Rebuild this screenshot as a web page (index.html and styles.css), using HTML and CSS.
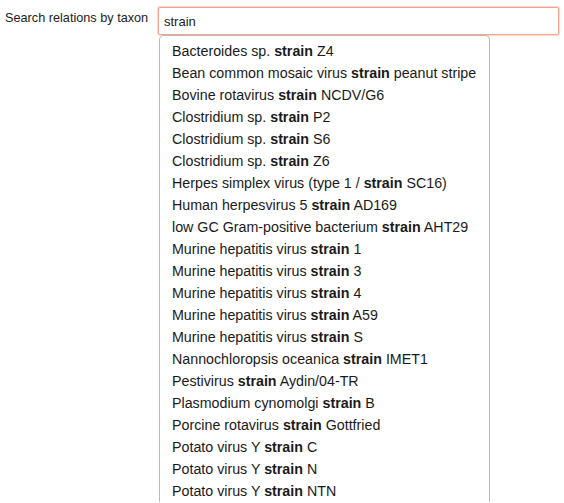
FILE: index.html
```html
<!DOCTYPE html>
<html>
<head>
<meta charset="utf-8">
<link rel="stylesheet" href="styles.css">
</head>
<body>
<div class="field">
  <label class="label" for="q">Search relations by taxon</label>
  <div class="control">
    <input class="input" id="q" type="text" value="strain">
    <ul class="menu">
      <li>Bacteroides sp. <b>strain</b> Z4</li>
      <li>Bean common mosaic virus <b>strain</b> peanut stripe</li>
      <li>Bovine rotavirus <b>strain</b> NCDV/G6</li>
      <li>Clostridium sp. <b>strain</b> P2</li>
      <li>Clostridium sp. <b>strain</b> S6</li>
      <li>Clostridium sp. <b>strain</b> Z6</li>
      <li>Herpes simplex virus (type 1 / <b>strain</b> SC16)</li>
      <li>Human herpesvirus 5 <b>strain</b> AD169</li>
      <li>low GC Gram-positive bacterium <b>strain</b> AHT29</li>
      <li>Murine hepatitis virus <b>strain</b> 1</li>
      <li>Murine hepatitis virus <b>strain</b> 3</li>
      <li>Murine hepatitis virus <b>strain</b> 4</li>
      <li>Murine hepatitis virus <b>strain</b> A59</li>
      <li>Murine hepatitis virus <b>strain</b> S</li>
      <li>Nannochloropsis oceanica <b>strain</b> IMET1</li>
      <li>Pestivirus <b>strain</b> Aydin/04-TR</li>
      <li>Plasmodium cynomolgi <b>strain</b> B</li>
      <li>Porcine rotavirus <b>strain</b> Gottfried</li>
      <li>Potato virus Y <b>strain</b> C</li>
      <li>Potato virus Y <b>strain</b> N</li>
      <li>Potato virus Y <b>strain</b> NTN</li>
    </ul>
  </div>
</div>
</body>
</html>
```

FILE: styles.css
```css
html, body {
  margin: 0;
  padding: 0;
  background: #fff;
}
body {
  font-family: "Liberation Sans", Arial, sans-serif;
  color: #222;
}
.field {
  display: flex;
  align-items: flex-start;
  padding: 7px 5px 0 5px;
}
.label {
  font-size: 12.7px;
  line-height: 16px;
  padding-top: 3px;
  width: 153px;
  flex: none;
}
.control {
  display: flex;
  flex-direction: column;
  width: 401px;
}
.input {
  display: block;
  box-sizing: border-box;
  width: 401px;
  height: 28px;
  margin: 0;
  padding: 0 5px;
  font-family: "Liberation Sans", Arial, sans-serif;
  font-size: 13px;
  color: #222;
  border: 1px solid #f3a48c;
  box-shadow: 0 0 1px 1px rgba(243, 164, 140, 0.45);
  border-radius: 2px;
  outline: none;
  background: #fff;
}
.menu {
  margin: 0 0 0 1px;
  width: 331px;
  box-sizing: border-box;
  padding: 4px 0 0 12px;
  list-style: none;
  border: 1px solid #bbb;
  border-bottom: none;
  border-radius: 5px 5px 0 0;
  background: #fff;
  font-size: 14.25px;
  color: #1a1a1a;
}
.menu li {
  line-height: 22px;
  height: 22px;
  white-space: nowrap;
}
.menu b {
  font-weight: bold;
}
```
